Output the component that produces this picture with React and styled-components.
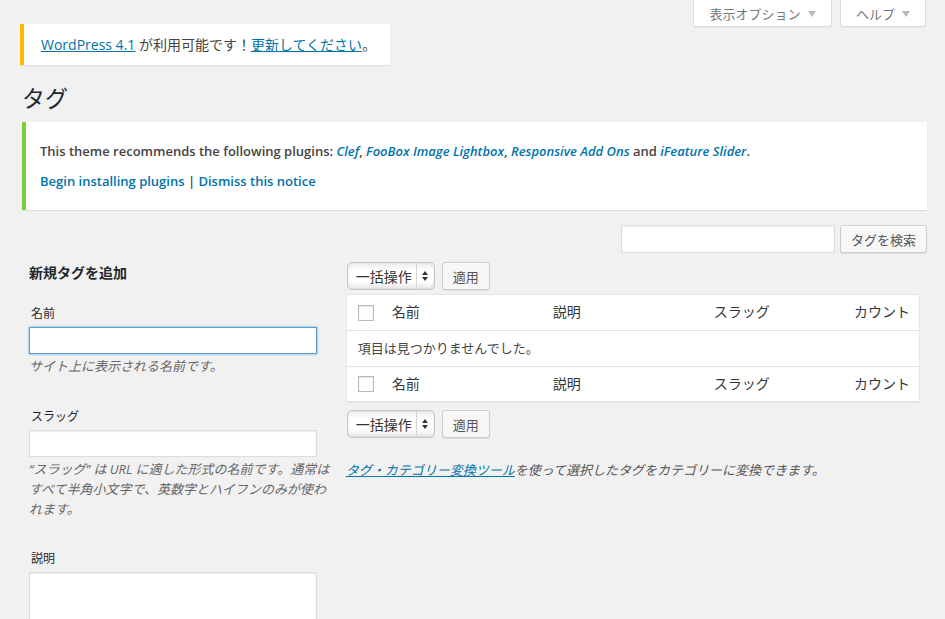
import React from "react";
import styled, { createGlobalStyle } from "styled-components";

const GlobalStyle = createGlobalStyle`
  body {
    margin: 0;
    background: #f1f1f1;
    color: #444;
    font-family: "Open Sans", "Noto Sans CJK JP", sans-serif;
    font-size: 13px;
  }
`;

const Top = styled.div`
  display: flex;
  justify-content: space-between;
  align-items: flex-start;
  padding: 0 19px 0 20px;
`;

const ScreenMeta = styled.div`
  display: flex;
  gap: 8px;
`;

const MetaButton = styled.div`
  display: flex;
  align-items: center;
  justify-content: center;
  height: 27px;
  width: ${(p) => p.width}px;
  box-sizing: border-box;
  background: #fff;
  border: 1px solid #ddd;
  border-top: none;
  border-radius: 0 0 3px 3px;
  box-shadow: 0 1px 1px rgba(0, 0, 0, 0.04);
  color: #72777c;
  font-size: 13px;
  white-space: nowrap;
  gap: 7px;
`;

const Caret = styled.span`
  width: 0;
  height: 0;
  border-left: 4px solid transparent;
  border-right: 4px solid transparent;
  border-top: 6px solid #b4b9be;
  margin-top: 1px;
`;

const UpdateNag = styled.div`
  margin-top: 24px;
  background: #fff;
  border-left: 4px solid #ffba00;
  box-shadow: 0 1px 1px rgba(0, 0, 0, 0.08);
  padding: 11px 14px 11px 17px;
  font-size: 14px;
  line-height: 19px;
  color: #444;
`;

const Link = styled.a`
  color: #0073aa;
  text-decoration: ${(p) => (p.plain ? "none" : "underline")};
  font-style: ${(p) => (p.italic ? "italic" : "normal")};
`;

const Wrap = styled.div`
  margin: 10px 18px 0 22px;
`;

const Title = styled.h1`
  margin: 0;
  padding: 9px 15px 4px 0;
  font-size: 23px;
  line-height: 29px;
  font-weight: 400;
  color: #23282d;
`;

const Notice = styled.div`
  margin: 5px 0 15px;
  background: #fff;
  border-left: 4px solid #7ad03a;
  box-shadow: 0 1px 1px rgba(0, 0, 0, 0.08);
  padding: 19px 14px;
  display: flex;
  flex-direction: column;
  gap: 10px;
  font-weight: 600;
  font-size: 13px;
  line-height: 20px;
  color: #444;
`;

const NoticeLine = styled.p`
  margin: 0;
`;

const SearchRow = styled.div`
  display: flex;
  justify-content: flex-end;
  gap: 5px;
`;

const TextInput = styled.div`
  width: ${(p) => p.width || "auto"};
  height: ${(p) => p.height || 28}px;
  box-sizing: border-box;
  background: #fff;
  border: 1px solid ${(p) => (p.focused ? "#5b9dd9" : "#ddd")};
  box-shadow: ${(p) =>
    p.focused ? "0 0 2px rgba(30, 140, 190, 0.8)" : "inset 0 1px 2px rgba(0, 0, 0, 0.07)"};
`;

const Button = styled.button`
  height: 28px;
  padding: 0 10px;
  font-family: "Open Sans", "Noto Sans CJK JP", sans-serif;
  font-size: 13px;
  color: #555;
  background: #f7f7f7;
  border: 1px solid #ccc;
  border-radius: 3px;
  box-shadow: inset 0 1px 0 #fff, 0 1px 0 rgba(0, 0, 0, 0.08);
`;

const Columns = styled.div`
  display: grid;
  grid-template-columns: 35% 65%;
`;

const ColWrap = styled.div`
  padding: 0 7px;
`;

const FormTitle = styled.h3`
  margin: 10px 0 0;
  font-size: 14px;
  line-height: 19px;
  font-weight: 700;
  color: #23282d;
`;

const Field = styled.div`
  margin-top: ${(p) => p.top}px;
`;

const Label = styled.div`
  font-size: 12px;
  line-height: 18px;
  color: #23282d;
  padding-left: 2px;
  margin-bottom: 4px;
`;

const FieldBox = styled.div`
  width: 95%;
`;

const Help = styled.p`
  margin: 2px 0 0;
  font-size: 13px;
  line-height: 20px;
  font-style: italic;
  color: #666;
`;

const TableNav = styled.div`
  display: flex;
  gap: 7px;
  padding-left: 1px;
  margin-top: ${(p) => p.top}px;
`;

const Select = styled.div`
  display: flex;
  align-items: center;
  width: 88px;
  height: 28px;
  box-sizing: border-box;
  border: 1px solid #c6c6c6;
  border-radius: 5px;
  background: linear-gradient(#ececec, #fff 30%, #fff 70%, #e6e6e6);
  box-shadow: inset 0 0 3px rgba(0, 0, 0, 0.08);
  font-size: 14px;
  color: #333;
`;

const SelectText = styled.span`
  flex: 1;
  padding-left: 8px;
`;

const SelectArrow = styled.span`
  display: flex;
  align-items: center;
  justify-content: center;
  width: 17px;
  height: 100%;
  border-left: 1px solid #d6d6d6;
`;

const Table = styled.div`
  margin-top: 4px;
  background: #fff;
  border: 1px solid #e5e5e5;
  box-shadow: 0 1px 1px rgba(0, 0, 0, 0.04);
  font-family: "Noto Sans CJK JP", sans-serif;
`;

const Row = styled.div`
  display: grid;
  grid-template-columns: 35px 161px 161px 1fr;
  align-items: center;
  box-sizing: border-box;
  height: ${(p) => p.height}px;
  border-top: ${(p) => (p.divided ? "1px solid #e1e1e1" : "none")};
  font-size: 14px;
  line-height: 20px;
  color: #32373c;
`;

const Cell = styled.div`
  padding-left: ${(p) => (p.check ? 11 : 10)}px;
  text-align: ${(p) => (p.right ? "right" : "left")};
  padding-right: ${(p) => (p.right ? 9 : 0)}px;
  margin-top: ${(p) => (p.check ? 0 : -3)}px;
`;

const Checkbox = styled.span`
  display: block;
  width: 16px;
  height: 16px;
  box-sizing: border-box;
  border: 1px solid #b4b9be;
  background: #fff;
  box-shadow: inset 0 1px 2px rgba(0, 0, 0, 0.1);
`;

const EmptyRow = styled.div`
  display: flex;
  align-items: center;
  box-sizing: border-box;
  height: 36px;
  border-top: 1px solid #e1e1e1;
  padding: 0 0 2px 11px;
  font-size: 13px;
  line-height: 20px;
  color: #444;
`;

const Note = styled.p`
  margin: 22px 0 0;
  font-size: 13px;
  line-height: 20px;
  font-style: italic;
  color: #555;
`;

const Arrows = () => (
  <svg width="8" height="12" viewBox="0 0 8 12">
    <path d="M4 1 L7 5 H1 Z" fill="#333" />
    <path d="M4 11 L7 7 H1 Z" fill="#333" />
  </svg>
);

const BulkActions = ({ top }) => (
  <TableNav top={top}>
    <Select>
      <SelectText>一括操作</SelectText>
      <SelectArrow>
        <Arrows />
      </SelectArrow>
    </Select>
    <Button>適用</Button>
  </TableNav>
);

const HeadRow = ({ divided, height }) => (
  <Row divided={divided} height={height}>
    <Cell check>
      <Checkbox />
    </Cell>
    <Cell>名前</Cell>
    <Cell>説明</Cell>
    <Cell right>
      <span style={{ float: "left" }}>スラッグ</span>カウント
    </Cell>
  </Row>
);

const App = () => (
  <>
    <GlobalStyle />
    <Top>
      <UpdateNag>
        <Link href="#">WordPress 4.1</Link> が利用可能です！<Link href="#">更新してください</Link>。
      </UpdateNag>
      <ScreenMeta>
        <MetaButton width={139}>
          表示オプション <Caret />
        </MetaButton>
        <MetaButton width={86}>
          ヘルプ <Caret />
        </MetaButton>
      </ScreenMeta>
    </Top>
    <Wrap>
      <Title>タグ</Title>
      <Notice>
        <NoticeLine>
          This theme recommends the following plugins: <Link plain italic href="#">Clef</Link>,{" "}
          <Link plain italic href="#">FooBox Image Lightbox</Link>,{" "}
          <Link plain italic href="#">Responsive Add Ons</Link> and{" "}
          <Link plain italic href="#">iFeature Slider</Link>.
        </NoticeLine>
        <NoticeLine>
          <Link plain href="#">Begin installing plugins</Link> | <Link plain href="#">Dismiss this notice</Link>
        </NoticeLine>
      </Notice>
      <SearchRow>
        <TextInput width="214px" />
        <Button>タグを検索</Button>
      </SearchRow>
      <Columns>
        <ColWrap>
          <FormTitle>新規タグを追加</FormTitle>
          <Field top={23}>
            <Label>名前</Label>
            <FieldBox>
              <TextInput focused height={27} />
            </FieldBox>
            <Help>サイト上に表示される名前です。</Help>
          </Field>
          <Field top={32}>
            <Label>スラッグ</Label>
            <FieldBox>
              <TextInput height={27} />
            </FieldBox>
            <Help>
              “スラッグ” は URL に適した形式の名前です。通常はすべて半角小文字で、英数字とハイフンのみが使われます。
            </Help>
          </Field>
          <Field top={31}>
            <Label>説明</Label>
            <FieldBox>
              <TextInput height={90} />
            </FieldBox>
          </Field>
        </ColWrap>
        <ColWrap>
          <BulkActions top={9} />
          <Table>
            <HeadRow height={35} />
            <EmptyRow>項目は見つかりませんでした。</EmptyRow>
            <HeadRow divided height={35} />
          </Table>
          <BulkActions top={8} />
          <Note>
            <Link italic href="#">タグ・カテゴリー変換ツール</Link>を使って選択したタグをカテゴリーに変換できます。
          </Note>
        </ColWrap>
      </Columns>
    </Wrap>
  </>
);

export default App;
